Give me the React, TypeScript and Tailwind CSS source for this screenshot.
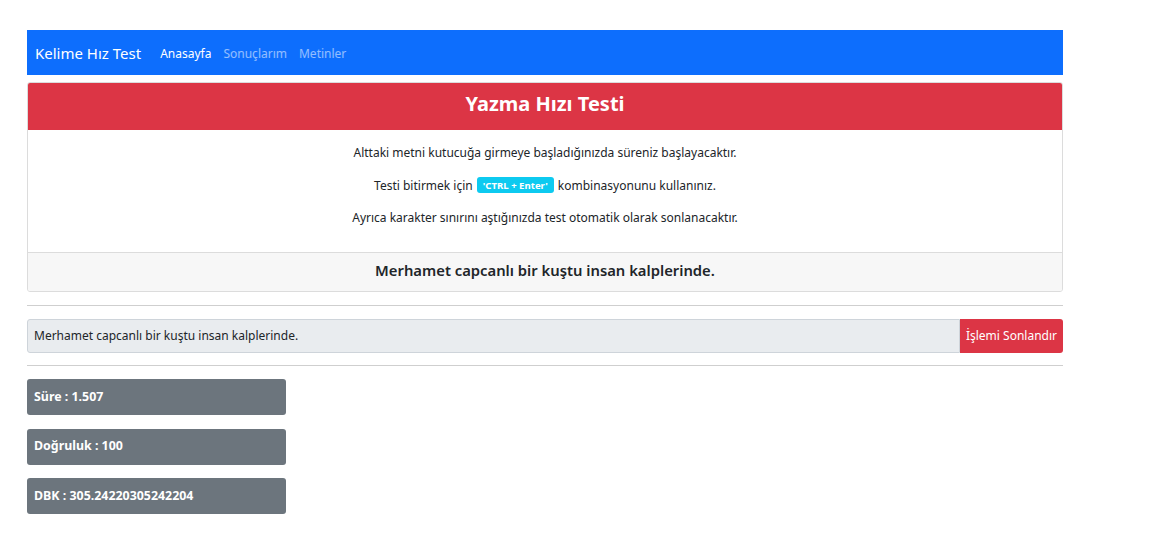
import React from "react";

const font = { fontFamily: '"Noto Sans", "Open Sans", sans-serif' };

export default function App() {
  return (
    <div className="min-h-[546px] w-[1156px] bg-white text-[#212529]" style={font}>
      <div className="ml-[27px] w-[1036px] pt-[30px]">
        {/* Navbar */}
        <nav className="flex h-[45px] items-center bg-[#0d6efd] px-[8px] pt-[2px]">
          <span className="mr-[13px] text-[15px] text-white">Kelime Hız Test</span>
          <span className="px-[6px] text-[12px] text-white">Anasayfa</span>
          <span className="px-[6px] text-[12px] text-white/55">Sonuçlarım</span>
          <span className="px-[6px] text-[12px] text-white/55">Metinler</span>
        </nav>

        {/* Card */}
        <div className="mt-[7px] overflow-hidden rounded-[3px] border border-[#dcdcdc]">
          <div className="flex h-[47px] items-start justify-center bg-[#dc3545] pt-[8px]">
            <h3 className="text-[20px] font-bold leading-[26px] text-white">Yazma Hızı Testi</h3>
          </div>
          <div className="flex flex-col items-center px-[13px] pt-[13px] pb-[12px] text-[12px] leading-[19px]">
            <p className="mb-[13.5px]">Alttaki metni kutucuğa girmeye başladığınızda süreniz başlayacaktır.</p>
            <p className="mb-[13.5px] flex items-center">
              Testi bitirmek için
              <span className="mx-[4px] inline-flex h-[16px] items-center rounded-[3px] bg-[#0dcaf0] px-[6px] text-[9.6px] font-bold text-white">
                'CTRL + Enter'
              </span>
              kombinasyonunu kullanınız.
            </p>
            <p className="mb-[13px]">Ayrıca karakter sınırını aştığınızda test otomatik olarak sonlanacaktır.</p>
          </div>
          <div className="flex h-[39px] items-start justify-center border-t border-[#dcdcdc] bg-[#f7f7f7] pt-[6px]">
            <h5 className="text-[14.8px] font-semibold leading-[22px] text-[#212529]">
              Merhamet capcanlı bir kuştu insan kalplerinde.
            </h5>
          </div>
        </div>

        <hr className="mt-[13px] mb-[13px] border-t border-[#cfcfcf]" />

        {/* Input group */}
        <div className="flex h-[34px]">
          <div className="flex flex-1 items-center rounded-l-[3px] border border-[#ced4da] bg-[#e9ecef] px-[6px] text-[12px]">
            Merhamet capcanlı bir kuştu insan kalplerinde.
          </div>
          <div className="flex items-center rounded-r-[3px] bg-[#dc3545] px-[6px] text-[12px] text-white">
            İşlemi Sonlandır
          </div>
        </div>

        <hr className="mt-[12px] mb-[13px] border-t border-[#cfcfcf]" />

        {/* Results */}
        <div className="flex flex-col gap-[13.5px]">
          {["Süre : 1.507", "Doğruluk : 100", "DBK : 305.24220305242204"].map((t) => (
            <div
              key={t}
              className="flex h-[36px] w-[259px] items-center rounded-[3px] bg-[#6c757d] px-[7px] text-[12.4px] font-bold text-white"
            >
              {t}
            </div>
          ))}
        </div>
      </div>
    </div>
  );
}
